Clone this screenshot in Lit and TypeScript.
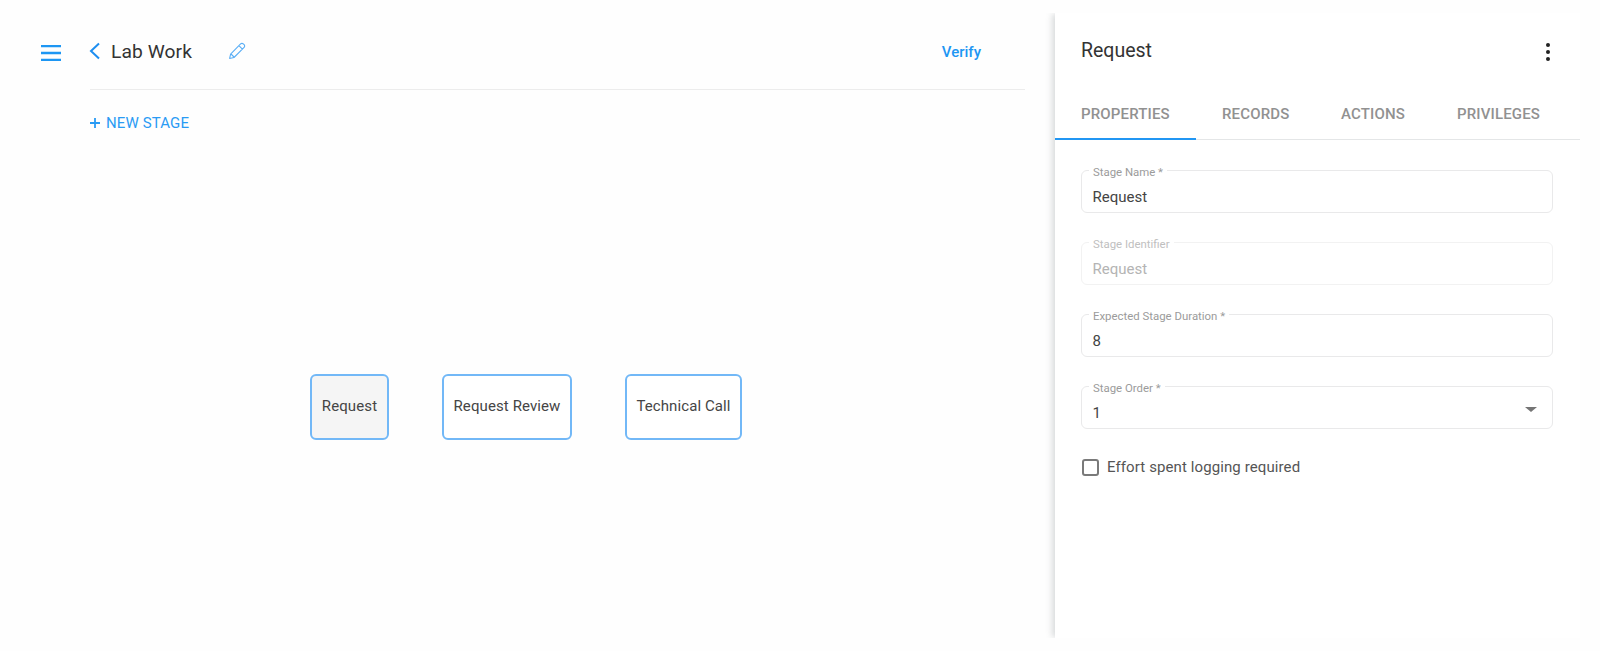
import { LitElement, html, css } from "lit";
import { customElement } from "lit/decorators.js";

@customElement("app-root")
export class AppRoot extends LitElement {
  static styles = css`
    :host { display: block; width: 1600px; height: 651px; background: #fefefe; overflow: hidden; font-family: Roboto, "Liberation Sans", sans-serif; color: #333; }
    .page { display: flex; height: 651px; }
    .main { width: 1055px; flex: none; display: flex; padding: 0 0 0 41px; box-sizing: border-box; }
    .menu { width: 20px; flex: none; margin: 45px 29px 0 0; height: 16px; }
    .menu svg { display: block; }
    .content { width: 935px; flex: none; display: flex; flex-direction: column; }
    .head { height: 90px; box-sizing: border-box; border-bottom: 1px solid #ececec; display: flex; align-items: flex-start; padding-top: 39px; }
    .back { width: 11px; height: 18px; margin-right: 11px; margin-top: 3px; margin-left: -1px; flex: none; }
    .title { font-size: 19.2px; line-height: 24px; margin-top: 1px; letter-spacing: 0.1px; color: #333; width: 117px; flex: none; }
    .pencil { width: 18px; height: 18px; margin-top: 3px; flex: none; }
    .verify { margin-left: auto; margin-right: 44px; margin-top: 3px; color: #1d96f3; font-size: 15px; line-height: 20px; font-weight: 500; }
    .add { display: flex; align-items: center; gap: 6px; margin-top: 23px; color: #2a9bf4; font-size: 15px; line-height: 20px; letter-spacing: 0.12px; }
    .add svg { display: block; }
    .nodes { display: flex; gap: 53px; margin: 241px 0 0 220px; align-items: stretch; }
    .node { height: 66px; box-sizing: border-box; border: 2px solid #72b8f7; border-radius: 6px; display: flex; align-items: center; justify-content: center; font-size: 15px; letter-spacing: 0.1px; color: #454545; background: #fff; padding-bottom: 2px; }
    .node.sel { background: #f5f5f5; }
    .n1 { width: 79px; } .n2 { width: 130px; } .n3 { width: 117px; }
    .panel { width: 525px; flex: none; height: 625px; margin-top: 13px; background: #fff; box-shadow: -4px 0 6px -1px rgba(90, 100, 105, 0.22); clip-path: inset(0 0 0 -12px); display: flex; flex-direction: column; }
    .phead { display: flex; align-items: center; justify-content: space-between; padding: 0 26px; height: 73px; box-sizing: border-box; }
    .ptitle { font-size: 19.5px; line-height: 24px; color: #333; margin-top: 3px; }
    .dots { display: flex; flex-direction: column; gap: 3px; margin-top: 4px; margin-right: 4px; }
    .dots i { display: block; width: 4px; height: 4px; border-radius: 50%; background: #222; }
    .tabs { display: flex; height: 54px; border-bottom: 1px solid #e4e6e7; box-sizing: border-box; }
    .tab { box-sizing: border-box; height: 54px; padding: 18px 0 0 26px; font-size: 15px; line-height: 20px; font-weight: 500; letter-spacing: 0.15px; color: #919191; flex: none; }
    .tab.on { width: 141px; border-bottom: 2px solid #2196f3; }
    .t2 { width: 118px; } .t3 { width: 120px; padding-left: 27px !important; } .t4 { width: 120px; padding-left: 23px !important; }
    .form { display: flex; flex-direction: column; padding: 30px 26px 0 26px; gap: 29px; }
    .field { width: 472px; height: 43px; box-sizing: border-box; border: 1px solid #e9e9ea; border-radius: 6px; position: relative; padding: 15px 0 0 10.5px; font-size: 15px; line-height: 22px; color: #444; display: flex; justify-content: space-between; }
    .field label { position: absolute; left: 7px; top: -5px; padding: 0 4px; background: #fff; font-size: 11.4px; line-height: 13px; color: #9b9b9b; }
    .field.dis { border-color: #f2f2f2; color: #b4b4b4; }
    .field.dis label { color: #c0c0c0; }
    .caret { width: 0; height: 0; border-left: 6px solid transparent; border-right: 6px solid transparent; border-top: 5px solid #757575; margin: 5px 15px 0 0; }
    .check { display: flex; align-items: center; gap: 8px; margin: -1px 0 0 1px; font-size: 15px; line-height: 20px; color: #555; letter-spacing: 0.1px; }
    .box { width: 17px; height: 17px; box-sizing: border-box; border: 2px solid #7a7a7a; border-radius: 3px; flex: none; }
  `;

  render() {
    return html`
      <div class="page">
        <div class="main">
          <div class="menu">
            <svg width="20" height="16" viewBox="0 0 20 16"><path d="M0 1h20M0 8h20M0 15h20" stroke="#1d96f3" stroke-width="2.4" fill="none"/></svg>
          </div>
          <div class="content">
            <div class="head">
              <svg class="back" viewBox="0 0 11 18"><path d="M10 1.5 2 9l8 7.5" stroke="#1d8ef0" stroke-width="2" fill="none"/></svg>
              <div class="title">Lab Work</div>
              <svg class="pencil" viewBox="0 0 18 18"><path d="M12.6 1.9a1.9 1.9 0 0 1 2.7 0l.8.8a1.9 1.9 0 0 1 0 2.7L6 15.5l-4.4 1 1-4.4zM10.9 3.7l3.5 3.5M3 12l3 3" stroke="#5aaef5" stroke-width="1.1" fill="none" stroke-linejoin="round"/></svg>
              <div class="verify">Verify</div>
            </div>
            <div class="add">
              <svg width="10" height="10" viewBox="0 0 10 10"><path d="M5 0v10M0 5h10" stroke="#2a9bf4" stroke-width="1.8"/></svg>
              <span>NEW STAGE</span>
            </div>
            <div class="nodes">
              <div class="node sel n1">Request</div>
              <div class="node n2">Request Review</div>
              <div class="node n3">Technical Call</div>
            </div>
          </div>
        </div>
        <div class="panel">
          <div class="phead">
            <div class="ptitle">Request</div>
            <div class="dots"><i></i><i></i><i></i></div>
          </div>
          <div class="tabs">
            <div class="tab on">PROPERTIES</div>
            <div class="tab t2">RECORDS</div>
            <div class="tab t3">ACTIONS</div>
            <div class="tab t4">PRIVILEGES</div>
          </div>
          <div class="form">
            <div class="field"><label>Stage Name *</label><span>Request</span></div>
            <div class="field dis"><label>Stage Identifier</label><span>Request</span></div>
            <div class="field"><label>Expected Stage Duration *</label><span>8</span></div>
            <div class="field"><label>Stage Order *</label><span>1</span><div class="caret"></div></div>
            <div class="check"><div class="box"></div><span>Effort spent logging required</span></div>
          </div>
        </div>
      </div>
    `;
  }
}
